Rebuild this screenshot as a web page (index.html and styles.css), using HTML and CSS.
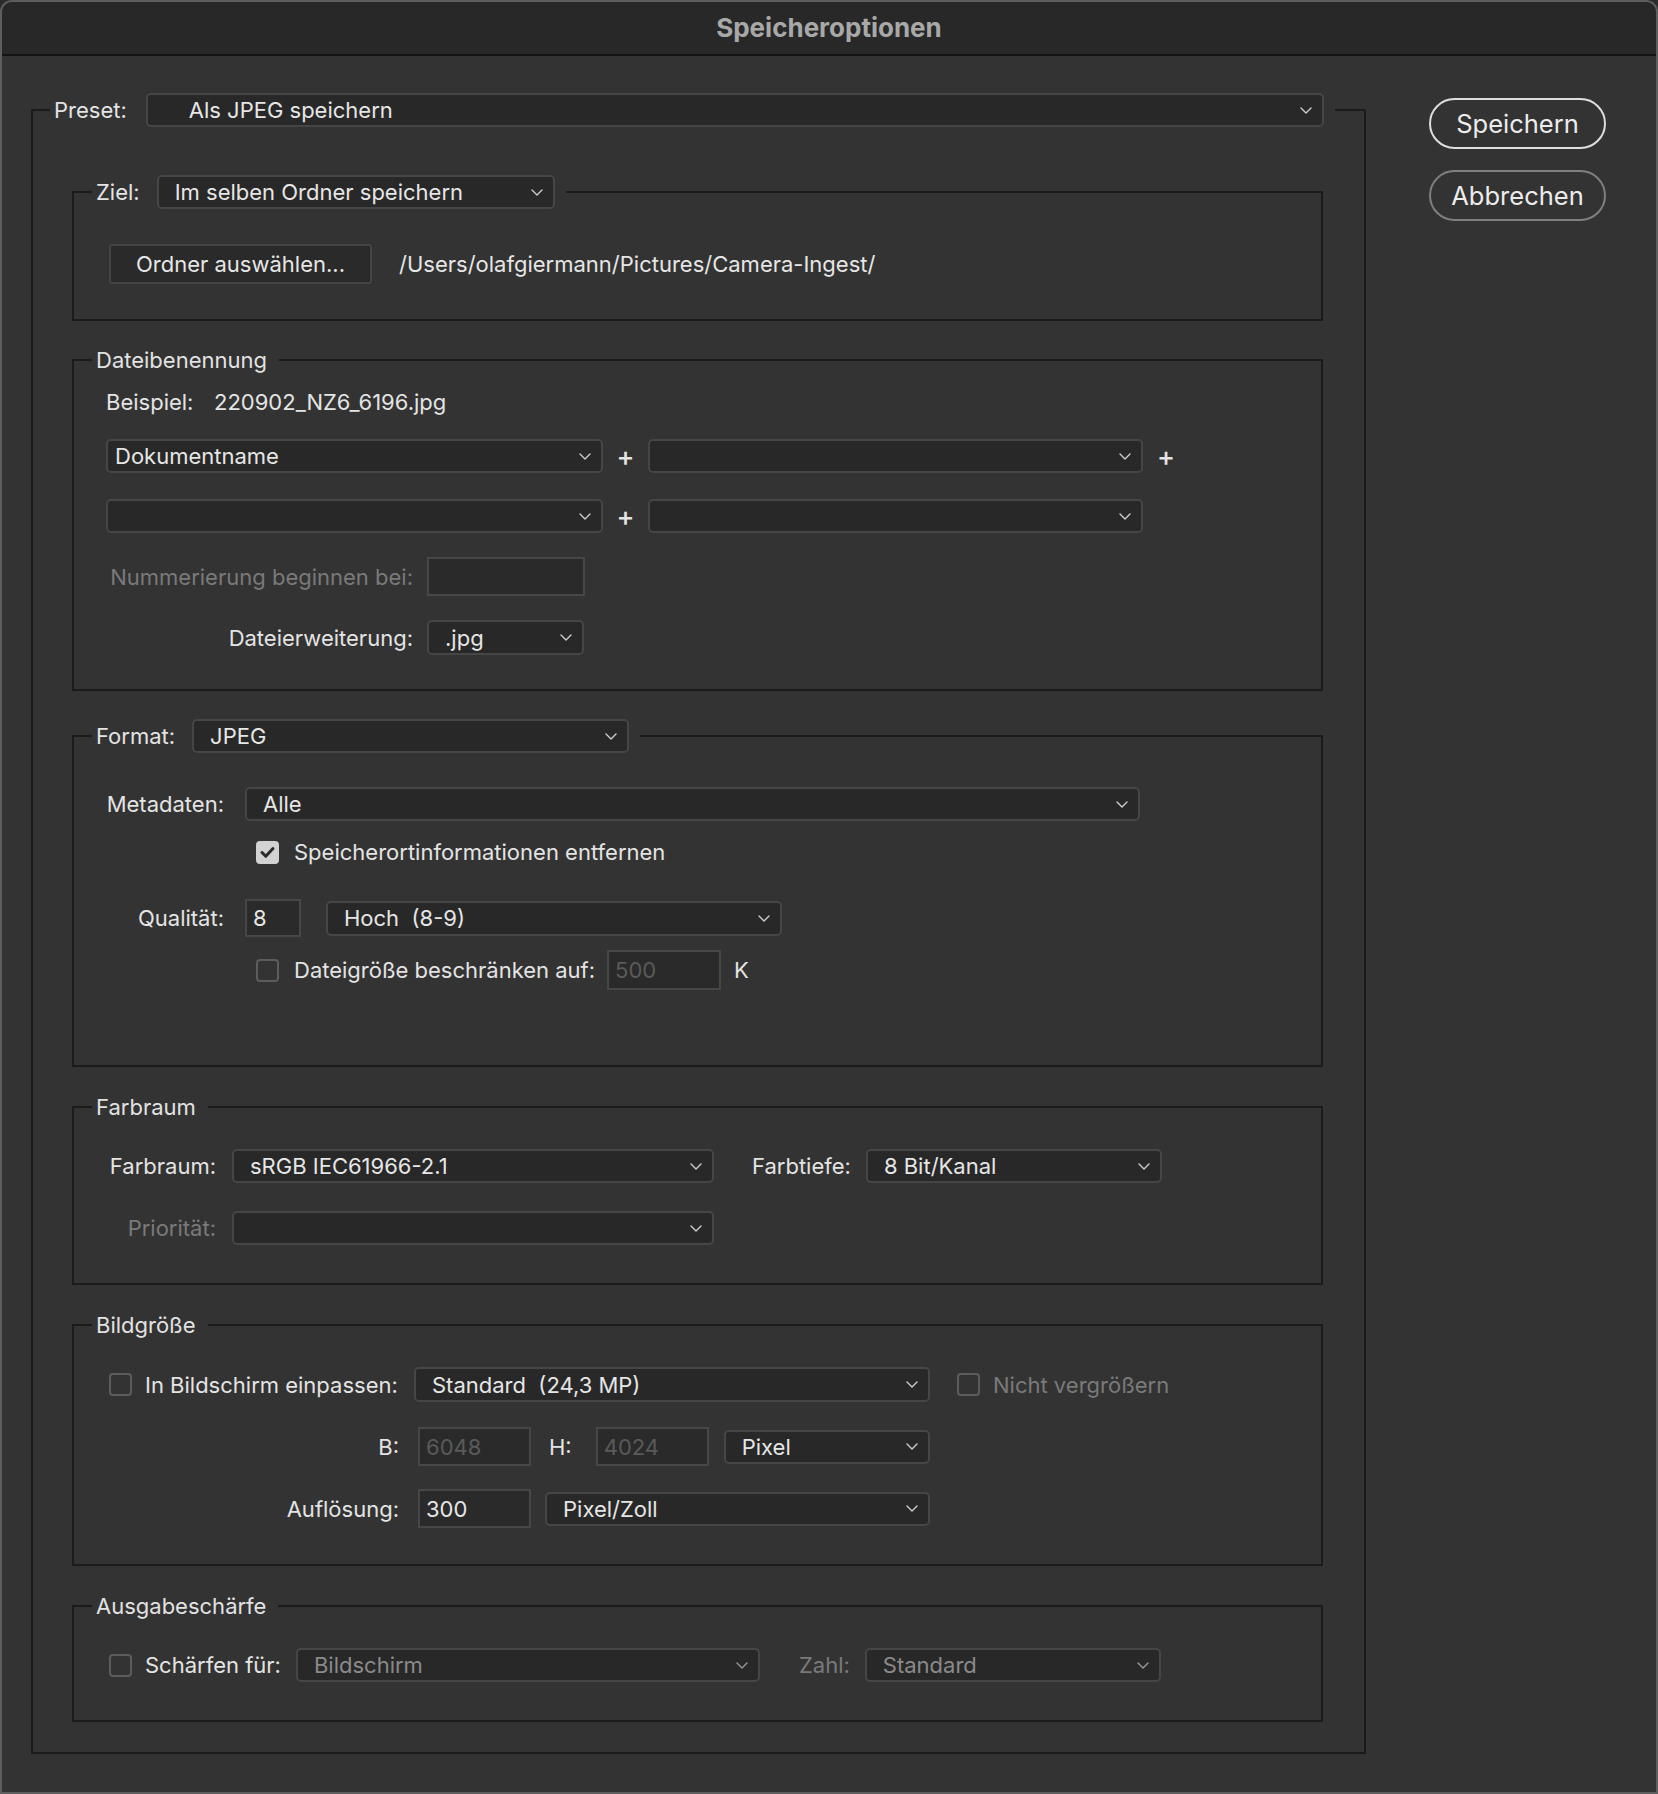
FILE: index.html
```html
<!DOCTYPE html>
<html lang="de">
<head>
<meta charset="utf-8">
<title>Speicheroptionen</title>
<link rel="stylesheet" href="styles.css">
</head>
<body>
<div class="window">
  <div class="titlebar">Speicheroptionen</div>
  <div class="content">
    <fieldset class="group outer">
      <legend class="legend-ctl outer-legend">
        <span class="lbl">Preset:</span>
        <div class="select w-preset pad-wide"><span>Als JPEG speichern</span><svg class="chev" viewBox="0 0 12 7"><path d="M1 1l5 5 5-5"/></svg></div>
      </legend>

      <fieldset class="group">
        <legend class="legend-ctl">
          <span class="lbl">Ziel:</span>
          <div class="select w-ziel"><span>Im selben Ordner speichern</span><svg class="chev" viewBox="0 0 12 7"><path d="M1 1l5 5 5-5"/></svg></div>
        </legend>
        <div class="row ziel-row">
          <button class="btn-plain">Ordner auswählen...</button>
          <span class="path">/Users/olafgiermann/Pictures/Camera-Ingest/</span>
        </div>
      </fieldset>

      <fieldset class="group g-naming">
        <legend class="legend-txt">Dateibenennung</legend>
        <div class="row example-row">
          <span class="ex-lbl">Beispiel:</span>
          <span>220902_NZ6_6196.jpg</span>
        </div>
        <div class="row name-row first">
          <div class="select w-name pad-small"><span>Dokumentname</span><svg class="chev" viewBox="0 0 12 7"><path d="M1 1l5 5 5-5"/></svg></div>
          <span class="plus">+</span>
          <div class="select w-name2"><span></span><svg class="chev" viewBox="0 0 12 7"><path d="M1 1l5 5 5-5"/></svg></div>
          <span class="plus">+</span>
        </div>
        <div class="row name-row second">
          <div class="select w-name pad-small"><span></span><svg class="chev" viewBox="0 0 12 7"><path d="M1 1l5 5 5-5"/></svg></div>
          <span class="plus">+</span>
          <div class="select w-name2"><span></span><svg class="chev" viewBox="0 0 12 7"><path d="M1 1l5 5 5-5"/></svg></div>
        </div>
        <div class="row num-row">
          <span class="lbl-col col-naming disabled">Nummerierung beginnen bei:</span>
          <div class="input w-num"></div>
        </div>
        <div class="row ext-row">
          <span class="lbl-col col-naming">Dateierweiterung:</span>
          <div class="select w-ext"><span>.jpg</span><svg class="chev" viewBox="0 0 12 7"><path d="M1 1l5 5 5-5"/></svg></div>
        </div>
      </fieldset>

      <fieldset class="group g-format">
        <legend class="legend-ctl">
          <span class="lbl">Format:</span>
          <div class="select w-format"><span>JPEG</span><svg class="chev" viewBox="0 0 12 7"><path d="M1 1l5 5 5-5"/></svg></div>
        </legend>
        <div class="row meta-row">
          <span class="lbl-col col-format">Metadaten:</span>
          <div class="select w-meta"><span>Alle</span><svg class="chev" viewBox="0 0 12 7"><path d="M1 1l5 5 5-5"/></svg></div>
        </div>
        <div class="row check-row loc-row">
          <span class="checkbox checked"><svg viewBox="0 0 23 23"><path d="M6 11.5l3.8 3.8L17 7.5"/></svg></span>
          <span>Speicherortinformationen entfernen</span>
        </div>
        <div class="row qual-row">
          <span class="lbl-col col-format">Qualität:</span>
          <div class="input w-qual"><span>8</span></div>
          <div class="select w-hoch"><span>Hoch&nbsp; (8-9)</span><svg class="chev" viewBox="0 0 12 7"><path d="M1 1l5 5 5-5"/></svg></div>
        </div>
        <div class="row check-row size-row">
          <span class="checkbox"></span>
          <span>Dateigröße beschränken auf:</span>
          <div class="input w-size"><span class="dim">500</span></div>
          <span class="unit">K</span>
        </div>
      </fieldset>

      <fieldset class="group g-std">
        <legend class="legend-txt">Farbraum</legend>
        <div class="row">
          <span class="lbl-col col-color">Farbraum:</span>
          <div class="select w-space"><span>sRGB IEC61966-2.1</span><svg class="chev" viewBox="0 0 12 7"><path d="M1 1l5 5 5-5"/></svg></div>
          <span class="lbl farbtiefe">Farbtiefe:</span>
          <div class="select w-depth"><span>8 Bit/Kanal</span><svg class="chev" viewBox="0 0 12 7"><path d="M1 1l5 5 5-5"/></svg></div>
        </div>
        <div class="row prio-row">
          <span class="lbl-col col-color disabled">Priorität:</span>
          <div class="select w-space"><span></span><svg class="chev" viewBox="0 0 12 7"><path d="M1 1l5 5 5-5"/></svg></div>
        </div>
      </fieldset>

      <fieldset class="group g-std g-size">
        <legend class="legend-txt">Bildgröße</legend>
        <div class="row">
          <span class="col-size check-lbl"><span class="checkbox"></span><span>In Bildschirm einpassen:</span></span>
          <div class="select w-fit"><span>Standard&nbsp; (24,3 MP)</span><svg class="chev" viewBox="0 0 12 7"><path d="M1 1l5 5 5-5"/></svg></div>
          <span class="checkbox no-enlarge"></span>
          <span class="disabled">Nicht vergrößern</span>
        </div>
        <div class="row dim-row">
          <span class="lbl-col col-size">B:</span>
          <div class="input w-dim"><span class="dim">6048</span></div>
          <span class="lbl h-lbl">H:</span>
          <div class="input w-dim"><span class="dim">4024</span></div>
          <div class="select w-pixel"><span>Pixel</span><svg class="chev" viewBox="0 0 12 7"><path d="M1 1l5 5 5-5"/></svg></div>
        </div>
        <div class="row res-row">
          <span class="lbl-col col-size">Auflösung:</span>
          <div class="input w-dim"><span>300</span></div>
          <div class="select w-unit"><span>Pixel/Zoll</span><svg class="chev" viewBox="0 0 12 7"><path d="M1 1l5 5 5-5"/></svg></div>
        </div>
      </fieldset>

      <fieldset class="group g-std g-sharp">
        <legend class="legend-txt">Ausgabeschärfe</legend>
        <div class="row">
          <span class="check-lbl sharp-lbl"><span class="checkbox"></span><span>Schärfen für:</span></span>
          <div class="select w-sharp off"><span>Bildschirm</span><svg class="chev" viewBox="0 0 12 7"><path d="M1 1l5 5 5-5"/></svg></div>
          <span class="lbl disabled zahl">Zahl:</span>
          <div class="select w-depth off"><span>Standard</span><svg class="chev" viewBox="0 0 12 7"><path d="M1 1l5 5 5-5"/></svg></div>
        </div>
      </fieldset>
    </fieldset>

    <div class="actions">
      <button class="pill primary">Speichern</button>
      <button class="pill">Abbrechen</button>
    </div>
  </div>
</div>
</body>
</html>
```

FILE: styles.css
```css
* { box-sizing: border-box; }
html, body { margin: 0; padding: 0; }
body {
  background: #2b2b2b;
  font-family: Inter, "Noto Sans", "Liberation Sans", sans-serif;
  font-size: 22px;
  color: #e4e4e4;
}
.window {
  width: 1658px;
  height: 1794px;
  border: 2px solid #5e5e5e;
  border-radius: 12px 12px 0 0;
  background: #333333;
  overflow: hidden;
  display: flex;
  flex-direction: column;
}
.titlebar {
  flex: none;
  height: 54px;
  background: #282828;
  border-bottom: 2px solid #141414;
  display: flex;
  align-items: center;
  justify-content: center;
  padding-bottom: 2px;
  font-weight: 700;
  font-size: 26px;
  color: #a8a8a8;
}
.content {
  display: flex;
  align-items: flex-start;
  padding: 37px 0 0 29px;
}

/* group boxes */
.group {
  margin: 0;
  min-inline-size: 0;
  border: 2px solid #1b1b1b;
  padding: 0 20px 0 32px;
}
.outer {
  width: 1335px;
  flex: none;
  padding: 48px 41px 30px 39px;
}
.legend-ctl {
  display: flex;
  align-items: center;
  gap: 17px;
  margin-left: -14px;
  padding: 0 11px 0 4px;
}
.outer-legend {
  margin-left: -22px;
  gap: 19px;
}
.legend-txt {
  line-height: 26px;
  height: 26px;
  margin-left: -14px;
  padding: 0 12px 0 4px;
  color: #e2e2e2;
}
.group .group { padding-top: 35px; padding-bottom: 35px; }
.g-naming { margin-top: 26px; }
.group.g-naming { padding-top: 16px; padding-bottom: 34px; }
.g-format { margin-top: 28px; }
.group.g-format { padding-top: 34px; padding-bottom: 75px; }
.g-std { margin-top: 27px; }
.group.g-std { padding-top: 29px; padding-bottom: 38px; }
.group.g-size { padding-bottom: 36px; }

/* rows */
.row { display: flex; align-items: center; }
.ziel-row { padding-left: 3px; gap: 27px; }
.example-row { height: 26px; padding-left: 0; }
.ex-lbl { width: 108px; }
.name-row.first { margin-top: 24px; }
.name-row.second { margin-top: 26px; }
.num-row { margin-top: 24px; }
.ext-row { margin-top: 24px; }
.loc-row { margin-top: 18px; }
.qual-row { margin-top: 34px; }
.size-row { margin-top: 13px; }
.prio-row { margin-top: 28px; }
.dim-row { margin-top: 25px; }
.res-row { margin-top: 23px; }

.lbl { white-space: nowrap; }
.lbl-col { text-align: right; white-space: nowrap; flex: none; }
.col-naming { width: 307px; margin-right: 14px; }
.col-format { width: 118px; margin-right: 21px; }
.col-color { width: 110px; margin-right: 16px; }
.col-size { width: 293px; margin-right: 19px; }
.disabled { color: #7a7a7a; }
.dim { color: #5a5a5a; }

/* select */
.select {
  flex: none;
  height: 34px;
  background: #282828;
  border: 2px solid #464646;
  border-radius: 5px;
  display: flex;
  align-items: center;
  justify-content: space-between;
  padding: 0 10px 0 16px;
  white-space: nowrap;
  color: #e6e6e6;
}
.select.pad-wide { padding-left: 41px; }
.select.pad-small { padding-left: 7px; }
.select.off { color: #8a8a8a; }
.chev {
  width: 12px;
  height: 7px;
  flex: none;
  fill: none;
  stroke: #cfcfcf;
  stroke-width: 1.4;
  stroke-linecap: round;
  stroke-linejoin: round;
}
.select.off .chev { stroke: #9a9a9a; }

.w-preset { width: 1178px; }
.w-ziel { width: 398px; }
.w-name { width: 497px; }
.w-name2 { width: 495px; }
.w-ext { width: 157px; height: 35px; }
.w-format { width: 437px; }
.w-meta { width: 895px; }
.w-hoch { width: 456px; margin-left: 25px; height: 35px; }
.w-space { width: 482px; }
.w-depth { width: 296px; }
.w-fit { width: 516px; margin-left: -4px; height: 35px; }
.w-pixel { width: 206px; margin-left: 15px; }
.w-unit { width: 385px; margin-left: 14px; }
.w-sharp { width: 464px; }

.farbtiefe { margin-left: 38px; margin-right: 15px; }
.zahl { margin-left: 39px; margin-right: 15px; }
.h-lbl { margin-left: 18px; margin-right: 24px; }

.plus {
  width: 45px;
  text-align: center;
  font-size: 27px;
  font-weight: 500;
  color: #e4e4e4;
  flex: none;
  line-height: 1;
}
.w-name2 + .plus { width: 46px; }

/* inputs */
.input {
  flex: none;
  height: 38px;
  background: #2a2a2a;
  border: 2px solid #474747;
  display: flex;
  align-items: center;
  padding: 0 6px;
  color: #e6e6e6;
}
.w-num { width: 158px; height: 39px; }
.w-qual { width: 56px; }
.w-size { width: 114px; height: 40px; margin-left: -3px; }
.w-dim { width: 113px; height: 39px; }
.unit { margin-left: -2px; }

/* checkboxes */
.checkbox {
  flex: none;
  width: 23px;
  height: 23px;
  border: 2px solid #5c5c5c;
  border-radius: 4px;
  background: #333;
  display: inline-block;
}
.checkbox.checked {
  background: #d2d2d2;
  border-color: #d2d2d2;
}
.checkbox svg {
  display: block;
  fill: none;
  stroke: #2b2b2b;
  stroke-width: 3;
  stroke-linecap: round;
  stroke-linejoin: round;
  margin: -2px;
  width: 23px;
  height: 23px;
}
.check-row { padding-left: 150px; gap: 15px; }
.check-lbl { display: flex; align-items: center; gap: 13px; padding-left: 3px; white-space: nowrap; flex: none; }
.col-size.check-lbl { margin-right: 19px; }
.sharp-lbl { margin-right: 15px; }
.no-enlarge { margin-left: 27px; margin-right: 13px; }

/* buttons */
.btn-plain {
  font: inherit;
  color: #e6e6e6;
  width: 263px;
  height: 40px;
  background: #2a2a2a;
  border: 2px solid #444;
  border-radius: 3px;
  padding: 0;
}
.path { color: #e6e6e6; white-space: nowrap; }
.actions {
  margin-left: 63px;
  margin-top: 5px;
  display: flex;
  flex-direction: column;
  gap: 21px;
}
.pill {
  font: inherit;
  font-size: 25.5px;
  color: #ececec;
  width: 177px;
  height: 51px;
  border-radius: 26px;
  background: transparent;
  border: 2px solid #7f7f7f;
  padding: 0;
}
.pill.primary { border-color: #dedede; }
```
